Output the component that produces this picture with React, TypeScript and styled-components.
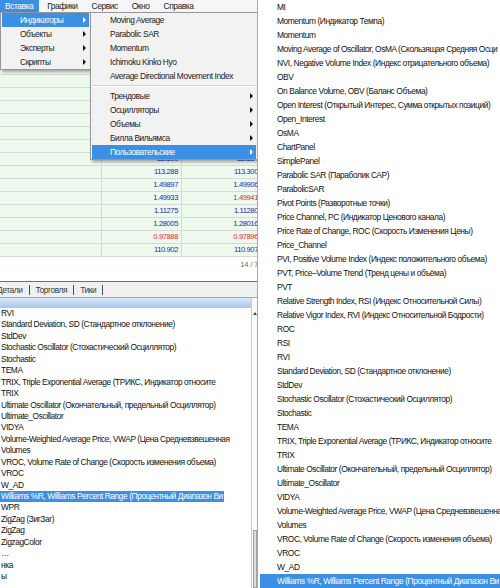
import React from 'react';
import styled, { createGlobalStyle } from 'styled-components';

const HIGHLIGHT = '#3b8fe5';

const GlobalStyle = createGlobalStyle`
  html, body {
    margin: 0;
    padding: 0;
    background: #ffffff;
  }
  body {
    font-family: 'Liberation Sans', Arial, sans-serif;
    font-size: 8.4px;
    letter-spacing: -0.42px;
    color: #1b1b1b;
  }
`;

const Screen = styled.div`
  width: 500px;
  height: 588px;
  display: flex;
  overflow: hidden;
`;

const Terminal = styled.div`
  position: relative;
  width: 257px;
  flex: none;
  display: flex;
  flex-direction: column;
  overflow: hidden;
`;

// menu bar
const MenuBar = styled.div`
  height: 12px;
  flex: none;
  display: flex;
  gap: 3px;
  background: #f5f6f7;
`;

const MenuBarItem = styled.div<{ $active?: boolean }>`
  height: 12px;
  line-height: 12px;
  padding: 0 6px 0 5px;
  white-space: nowrap;
  background: ${({ $active }) => ($active ? HIGHLIGHT : 'transparent')};
  color: ${({ $active }) => ($active ? '#ffffff' : '#1b1b1b')};
`;

// quotes table
const Quotes = styled.div`
  flex: none;
  display: flex;
  flex-direction: column;
  width: 262px;
`;

const QuoteHead = styled.div`
  height: 11px;
  background: #f0f0f0;
`;

const QuoteRow = styled.div`
  height: 13px;
  box-sizing: border-box;
  display: grid;
  grid-template-columns: 102px 80px 80px;
  background: #effaef;
  border-bottom: 1px solid #d3dcd3;
`;

const QuoteCell = styled.div<{ $down?: boolean }>`
  font-size: 7.6px;
  letter-spacing: -0.4px;
  line-height: 12px;
  text-align: right;
  padding-right: 3px;
  border-right: 1px solid #d3dcd3;
  color: ${({ $down }) => ($down ? '#e3262c' : '#2626b4')};
`;

const QuoteFooter = styled.div`
  height: 25px;
  box-sizing: border-box;
  border-bottom: 1px solid #6e6e6e;
  text-align: right;
  padding: 2px 0 0;
  line-height: 12px;
  font-size: 7.6px;
  letter-spacing: -0.2px;
  color: #6a6a6a;
`;

// tabs
const TabStrip = styled.div`
  height: 16px;
  flex: none;
  box-sizing: border-box;
  display: flex;
  align-items: center;
  background: #f0f0f0;
  border-bottom: 1px solid #a9a9a9;
`;

const Tab = styled.div`
  padding: 0 6px;
  line-height: 10px;
  border-right: 1px solid #4d4d4d;
  color: #3a3a3a;
  white-space: nowrap;

  &:first-child {
    margin-left: -9px;
  }
`;

// indicator list
const ListPane = styled.div`
  flex: 1;
  display: flex;
  min-height: 0;
`;

const ListBody = styled.div`
  flex: 1;
  min-width: 0;
  display: flex;
  flex-direction: column;
  overflow: hidden;
`;

const ListHeader = styled.div`
  height: 10px;
  flex: none;
  background: linear-gradient(#d7e6f7, #a9c7ea);
`;

const ListRow = styled.div`
  height: 11.44px;
  flex: none;
  display: flex;
  white-space: nowrap;
`;

const ListLabel = styled.span<{ $selected?: boolean }>`
  line-height: 11.44px;
  padding: 0 1px;
  color: ${({ $selected }) => ($selected ? '#ffffff' : '#111111')};
  background: ${({ $selected }) => ($selected ? HIGHLIGHT : 'transparent')};
`;

const ScrollTrack = styled.div`
  width: 5px;
  flex: none;
  display: flex;
  flex-direction: column;
  align-items: center;
  border-left: 1px solid #c9c9c9;
  background: #fbfbfb;
`;

const ScrollArrow = styled.div`
  margin-top: 14px;
  width: 0;
  height: 0;
  border-left: 2px solid transparent;
  border-right: 2px solid transparent;
  border-bottom: 3px solid #444444;
`;

const ScrollThumb = styled.div`
  margin-top: auto;
  width: 4px;
  height: 58px;
  box-sizing: border-box;
  border: 1px solid #a2a2a2;
  background: #dcdcdc;
`;

// dropdown menus
const Dropdown = styled.div<{ $left: number; $width: number; $height: number }>`
  position: absolute;
  top: 12px;
  left: ${({ $left }) => $left}px;
  width: ${({ $width }) => $width}px;
  height: ${({ $height }) => $height}px;
  box-sizing: border-box;
  padding: 0 1px;
  background: #f2f2f2;
  border: 1px solid #979797;
  box-shadow: 2px 2px 3px rgba(0, 0, 0, 0.35);
  display: flex;
  flex-direction: column;
`;

const MenuItem = styled.div<{ $active?: boolean }>`
  height: 14px;
  flex: none;
  display: flex;
  align-items: center;
  padding: 0 3px 0 18px;
  white-space: nowrap;
  background: ${({ $active }) => ($active ? HIGHLIGHT : 'transparent')};
  color: ${({ $active }) => ($active ? '#ffffff' : '#1b1b1b')};
`;

const SubArrow = styled.span<{ $active?: boolean }>`
  margin-left: auto;
  width: 0;
  height: 0;
  border-top: 3px solid transparent;
  border-bottom: 3px solid transparent;
  border-left: 3px solid ${({ $active }) => ($active ? '#ffffff' : '#111111')};
`;

const MenuSeparator = styled.div`
  height: 6px;
  flex: none;
  display: flex;
  flex-direction: column;
  justify-content: center;

  &::before {
    content: '';
    height: 1px;
    background: #d2d2d2;
    border-bottom: 1px solid #ffffff;
  }
`;

// custom indicators submenu (right column)
const CustomMenu = styled.div`
  flex: 1;
  background: #ffffff;
  border-left: 1px solid #a9a9a9;
  display: flex;
  flex-direction: column;
  overflow: hidden;
`;

const CustomItem = styled.div<{ $active?: boolean }>`
  height: 14px;
  line-height: 14px;
  flex: none;
  margin-left: 2px;
  padding-left: 17px;
  white-space: nowrap;
  color: ${({ $active }) => ($active ? '#ffffff' : '#111111')};
  background: ${({ $active }) => ($active ? HIGHLIGHT : 'transparent')};
`;

const menuBarItems = ['Вставка', 'Графики', 'Сервис', 'Окно', 'Справка'];

const insertItems = ['Индикаторы', 'Объекты', 'Эксперты', 'Скрипты'];

const topIndicators = [
  'Moving Average',
  'Parabolic SAR',
  'Momentum',
  'Ichimoku Kinko Hyo',
  'Average Directional Movement Index',
];

const indicatorGroups = ['Трендовые', 'Осцилляторы', 'Объемы', 'Билла Вильямса', 'Пользовательские'];

const quoteRows: { bid: string; ask: string; bidDown?: boolean; askDown?: boolean }[] = [
  { bid: '', ask: '' },
  { bid: '', ask: '' },
  { bid: '', ask: '' },
  { bid: '', ask: '' },
  { bid: '', ask: '' },
  { bid: '', ask: '' },
  { bid: '', ask: '' },
  { bid: '', ask: '' },
  { bid: '', ask: '' },
  { bid: '', ask: '' },
  { bid: '82.500', ask: '82.514' },
  { bid: '113.288', ask: '113.300' },
  { bid: '1.49897', ask: '1.49906' },
  { bid: '1.49933', ask: '1.49941', askDown: true },
  { bid: '1.11275', ask: '1.11280' },
  { bid: '1.28005', ask: '1.28016' },
  { bid: '0.97888', ask: '0.97896', bidDown: true, askDown: true },
  { bid: '110.902', ask: '110.907' },
];

const customIndicators = [
  'MI',
  'Momentum (Индикатор Темпа)',
  'Momentum',
  'Moving Average of Oscillator, OsMA (Скользящая Средняя Осци',
  'NVI, Negative Volume Index (Индекс отрицательного объема)',
  'OBV',
  'On Balance Volume, OBV (Баланс Объема)',
  'Open Interest (Открытый Интерес, Сумма открытых позиций)',
  'Open_Interest',
  'OsMA',
  'ChartPanel',
  'SimplePanel',
  'Parabolic SAR (Параболик САР)',
  'ParabolicSAR',
  'Pivot Points (Разворотные точки)',
  'Price Channel, PC (Индикатор Ценового канала)',
  'Price Rate of Change, ROC (Скорость Изменения Цены)',
  'Price_Channel',
  'PVI, Positive Volume Index (Индекс положительного объема)',
  'PVT, Price–Volume Trend (Тренд цены и объёма)',
  'PVT',
  'Relative Strength Index, RSI (Индекс Относительной Силы)',
  'Relative Vigor Index, RVI (Индекс Относительной Бодрости)',
  'ROC',
  'RSI',
  'RVI',
  'Standard Deviation, SD (Стандартное отклонение)',
  'StdDev',
  'Stochastic Oscillator (Стохастический Осциллятор)',
  'Stochastic',
  'TEMA',
  'TRIX, Triple Exponential Average (ТРИКС, Индикатор относите',
  'TRIX',
  'Ultimate Oscillator (Окончательный, предельный Осциллятор)',
  'Ultimate_Oscillator',
  'VIDYA',
  'Volume-Weighted Average Price, VWAP (Цена Средневзвешенная',
  'Volumes',
  'VROC, Volume Rate of Change (Скорость изменения объема)',
  'VROC',
  'W_AD',
  'Williams %R, Williams Percent Range (Процентный Диапазон Ви',
];

const SELECTED = 'Williams %R, Williams Percent Range (Процентный Диапазон Ви';

const navigatorItems = [
  ...customIndicators.slice(customIndicators.indexOf('RVI')),
  'WPR',
  'ZigZag (ЗигЗаг)',
  'ZigZag',
  'ZigzagColor',
  '…',
  'нка',
  'ы',
];

const App: React.FC = () => (
  <>
    <GlobalStyle />
    <Screen>
      <Terminal>
        <MenuBar>
          {menuBarItems.map((item, i) => (
            <MenuBarItem key={item} $active={i === 0}>
              {item}
            </MenuBarItem>
          ))}
        </MenuBar>

        <Quotes>
          <QuoteHead />
          {quoteRows.map((row, i) => (
            <QuoteRow key={i}>
              <QuoteCell />
              <QuoteCell $down={row.bidDown}>{row.bid}</QuoteCell>
              <QuoteCell $down={row.askDown}>{row.ask}</QuoteCell>
            </QuoteRow>
          ))}
          <QuoteFooter>14 / 75</QuoteFooter>
        </Quotes>

        <TabStrip>
          <Tab>Детали</Tab>
          <Tab>Торговля</Tab>
          <Tab>Тики</Tab>
        </TabStrip>

        <ListPane>
          <ListBody>
            <ListHeader />
            {navigatorItems.map((item, i) => (
              <ListRow key={i}>
                <ListLabel $selected={item === SELECTED}>{item}</ListLabel>
              </ListRow>
            ))}
          </ListBody>
          <ScrollTrack>
            <ScrollArrow />
            <ScrollThumb />
          </ScrollTrack>
        </ListPane>

        <Dropdown $left={0} $width={91} $height={58}>
          {insertItems.map((item, i) => (
            <MenuItem key={item} $active={i === 0}>
              {item}
              <SubArrow $active={i === 0} />
            </MenuItem>
          ))}
        </Dropdown>

        <Dropdown $left={90} $width={168} $height={148}>
          {topIndicators.map((item) => (
            <MenuItem key={item}>{item}</MenuItem>
          ))}
          <MenuSeparator />
          {indicatorGroups.map((item, i) => (
            <MenuItem key={item} $active={i === indicatorGroups.length - 1}>
              {item}
              <SubArrow $active={i === indicatorGroups.length - 1} />
            </MenuItem>
          ))}
        </Dropdown>
      </Terminal>

      <CustomMenu>
        {customIndicators.map((item) => (
          <CustomItem key={item} $active={item === SELECTED}>
            {item}
          </CustomItem>
        ))}
      </CustomMenu>
    </Screen>
  </>
);

export default App;
